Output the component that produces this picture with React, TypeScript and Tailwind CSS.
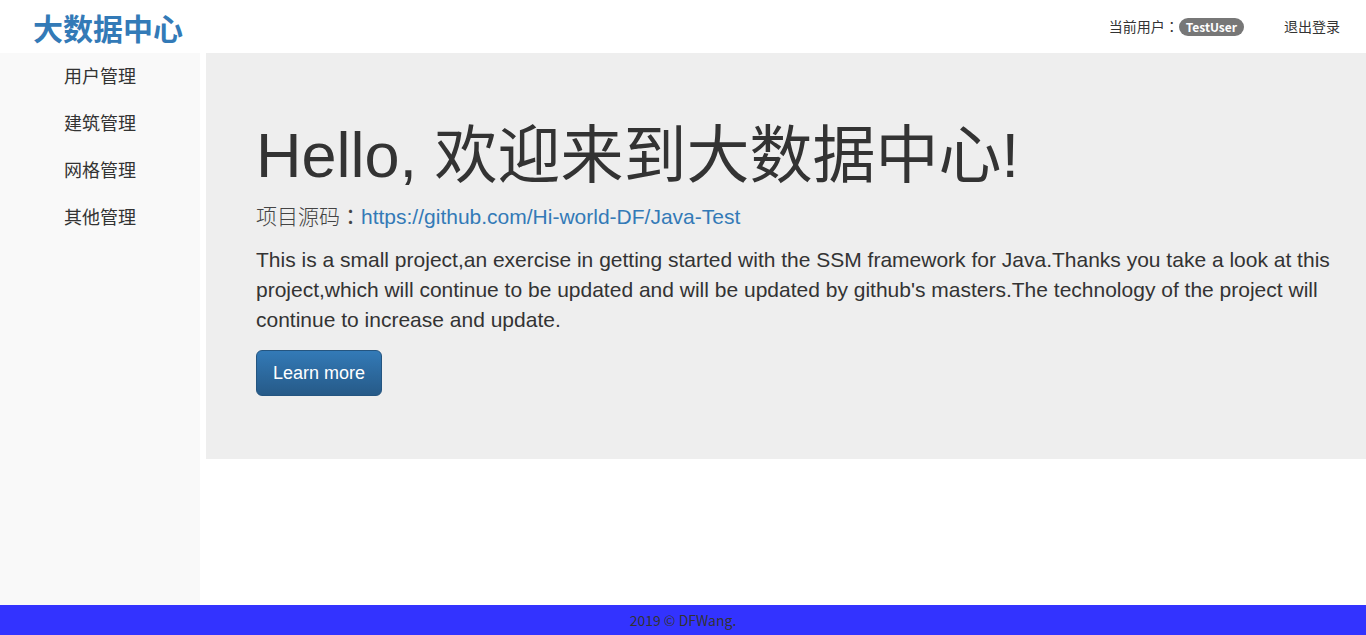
const sideItems = ['用户管理', '建筑管理', '网格管理', '其他管理'];

const cjk = { fontFamily: '"Noto Sans CJK SC", "Liberation Sans", sans-serif' };
const body = { fontFamily: '"Liberation Sans", "Noto Sans CJK SC", sans-serif' };
// centred full-width colon, as the original font draws it
const colon = { fontFamily: '"Noto Sans CJK TC", sans-serif' };

export default function App() {
  return (
    <div className="flex min-h-screen flex-col bg-white text-[#333]" style={body}>
      {/* top bar */}
      <header className="flex h-[53px] items-center justify-between">
        <div className="pl-[33px] text-[30px] font-bold leading-none text-[#337ab7]" style={cjk}>
          大数据中心
        </div>
        <div className="flex items-center pr-[26px] text-[14px] text-[#333]" style={cjk}>
          <span>
            当前用户<span style={colon}>：</span>
          </span>
          <span className="rounded-[10px] bg-[#777] px-[7px] py-[2px] text-[12px] font-bold leading-[14px] text-white">
            TestUser
          </span>
          <a className="ml-[40px]">退出登录</a>
        </div>
      </header>

      <div className="flex flex-1">
        <nav className="w-[200px] shrink-0 bg-[#f9f9f9]" style={cjk}>
          <ul className="-mt-px">
            {sideItems.map((item) => (
              <li key={item} className="flex h-[47px] items-center justify-center text-[18px] text-[#333]">
                {item}
              </li>
            ))}
          </ul>
        </nav>

        <main className="ml-[6px] flex-1 self-start bg-[#eee] pb-[48px] pl-[50px] pr-[24px] pt-[48px]">
          <h1 className="mb-[10px] mt-[20px] text-[63px] font-normal leading-[1.1] text-[#333]">
            Hello, 欢迎来到大数据中心!
          </h1>
          <p className="mb-[15px] h-[30px] text-[21px] leading-[30px]">
            <span className="font-light text-[#444]" style={cjk}>项目源码</span>
            <span className="inline-block h-[30px] align-top leading-[30px] text-[#444]" style={colon}>
              ：
            </span>
            <a href="#" className="text-[#337ab7]">
              https://github.com/Hi-world-DF/Java-Test
            </a>
          </p>
          <p className="mb-[15px] text-[21px] leading-[30px]">
            This is a small project,an exercise in getting started with the SSM framework for Java.Thanks you take a
            look at this project,which will continue to be updated and will be updated by github's masters.The
            technology of the project will continue to increase and update.
          </p>
          <p className="mb-[15px]">
            <a
              href="#"
              className="inline-block rounded-[6px] border border-[#245580] bg-gradient-to-b from-[#337ab7] to-[#265a88] px-[16px] py-[10px] text-[18px] leading-[24px] text-white"
            >
              Learn more
            </a>
          </p>
        </main>
      </div>

      <footer className="flex h-[30px] items-center justify-center bg-[#3333ff] text-[14px] text-[#333]" style={cjk}>
        2019 © DFWang.
      </footer>
    </div>
  );
}
